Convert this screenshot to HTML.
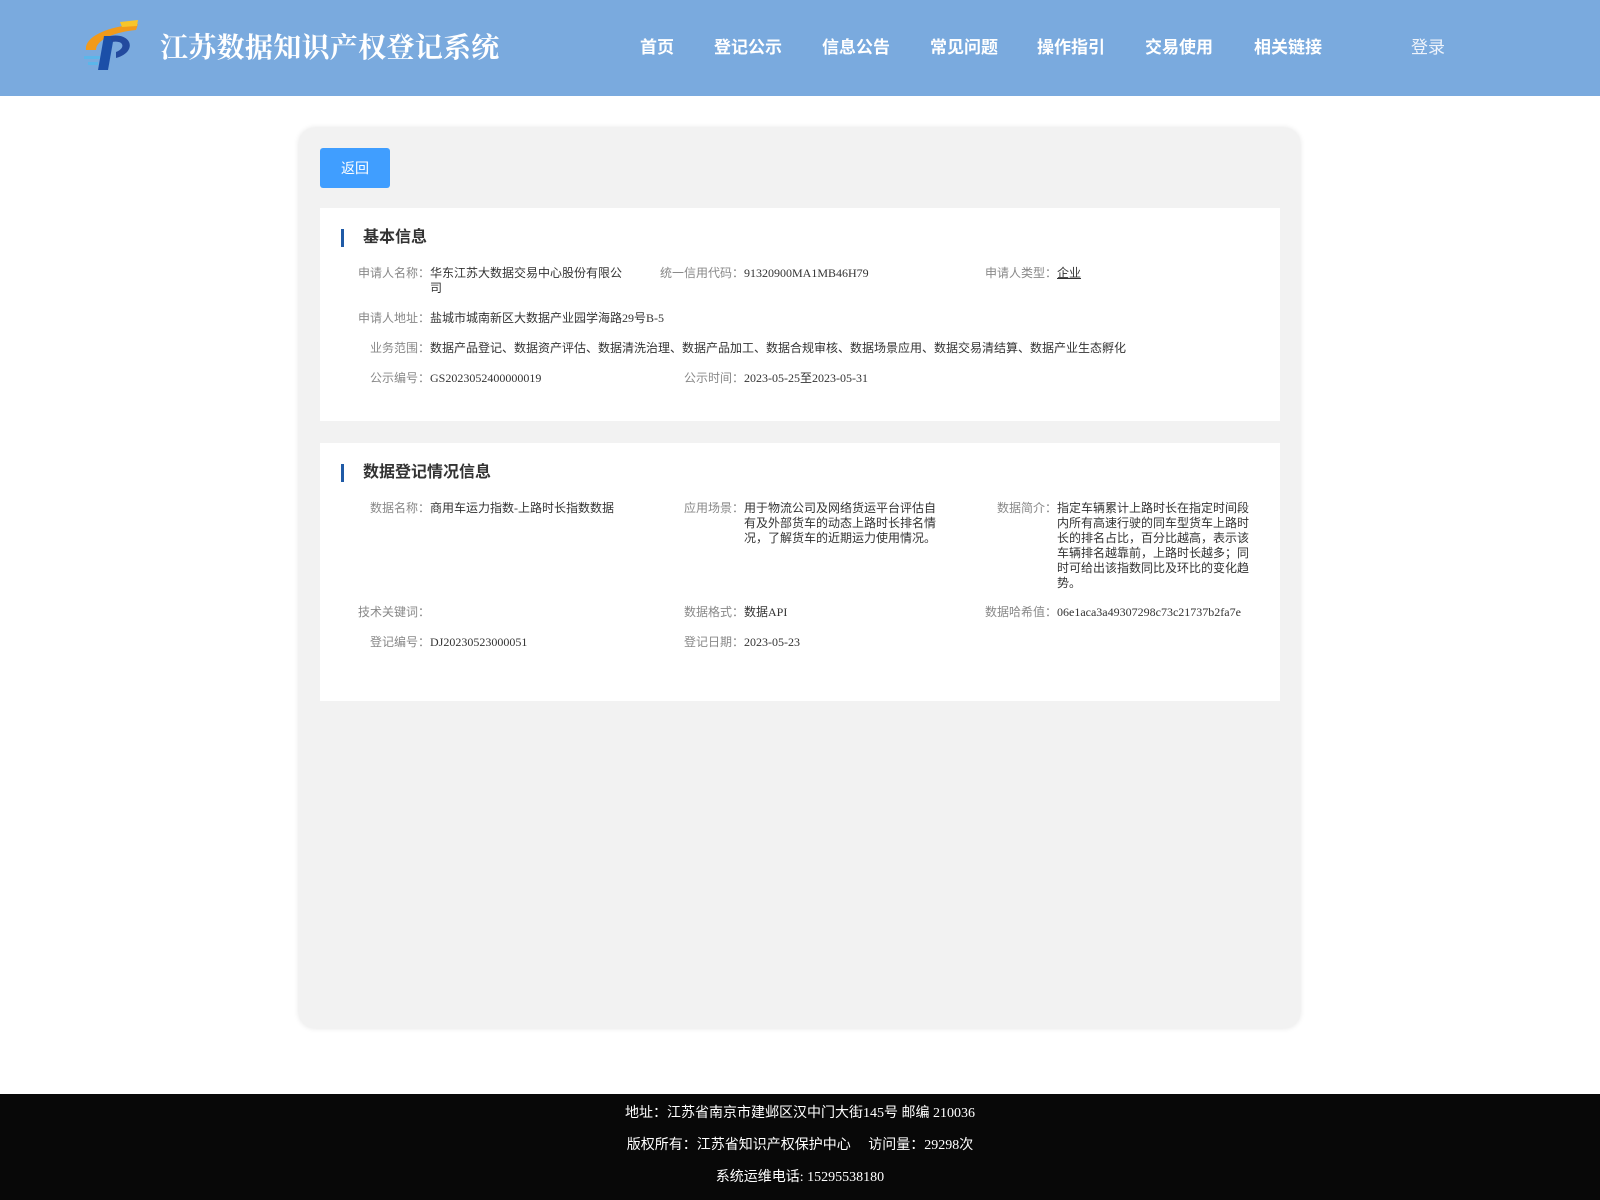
<!DOCTYPE html>
<html><head><meta charset="utf-8"><style>
*{margin:0;padding:0;box-sizing:border-box}
body{width:1600px;height:1200px;position:relative;background:#fff;font-family:"Liberation Serif","Noto Sans CJK SC",serif;overflow:hidden}
.hd{position:absolute;left:0;top:0;width:1600px;height:96px;background:#7aaade}
.title{position:absolute;left:160px;top:26px;color:#fff;font-size:28px;font-weight:bold;font-family:"Liberation Serif","Noto Serif CJK SC",serif;letter-spacing:0.3px}
.nav{position:absolute;top:33px;color:#fff;font-size:17px;font-weight:bold;font-family:"Liberation Sans","Noto Sans CJK SC",sans-serif}
.card{position:absolute;left:299px;top:128px;width:1001px;height:900px;background:#f2f2f2;border-radius:16px;box-shadow:0 0 6px rgba(0,0,0,.12)}
.btn{position:absolute;left:320px;top:148px;width:70px;height:40px;background:#409eff;border-radius:3px;color:#fff;font-size:14px;line-height:40px;text-align:center;font-family:"Liberation Sans","Noto Sans CJK SC",sans-serif}
.pn{position:absolute;left:320px;width:960px;background:#fff}
.pt{position:absolute;left:21px;font-size:16px;font-weight:bold;color:#333;padding-left:19px;border-left:3px solid #1f5aa6;line-height:18px;font-family:"Liberation Sans","Noto Sans CJK SC",sans-serif}
.r{position:absolute;font-size:12px;line-height:15px;display:flex}
.l{width:110px;text-align:right;color:#888;font-family:"Liberation Sans","Noto Sans CJK SC",sans-serif;flex:none}
.v{color:#333;width:194px}
.v.w{width:800px}
.ft{position:absolute;left:0;top:1094px;width:1600px;height:106px;background:#080808;color:#fff;font-size:14px;text-align:center;font-family:"Liberation Serif","Noto Sans CJK SC",serif}
.ft div{position:absolute;width:100%;}
</style></head><body>
<div class="hd">
<svg style="position:absolute;left:80px;top:18px" width="60" height="54" viewBox="0 0 60 54">
<path d="M6 32 C4 18 30 8 58 6 L56 12 C34 14 16 22 16 32 Z" fill="#f29a1a"/>
<path d="M40 4 L58 2 L57 8 L42 9Z" fill="#f7c52a"/>
<path d="M24 18 L34 18 L28 52 L18 52 Z" fill="#1b4fa8"/>
<path d="M30 18 C52 14 58 34 36 40 L36 34 C46 30 44 22 32 24Z" fill="#234a9e"/>
<rect x="4" y="38" width="16" height="3" fill="#5bb6ea"/><rect x="8" y="44" width="10" height="3" fill="#5bb6ea"/>
</svg>
<div class="title">江苏数据知识产权登记系统</div>
<div class="nav" style="left:640px">首页</div>
<div class="nav" style="left:714px">登记公示</div>
<div class="nav" style="left:822px">信息公告</div>
<div class="nav" style="left:930px">常见问题</div>
<div class="nav" style="left:1037px">操作指引</div>
<div class="nav" style="left:1145px">交易使用</div>
<div class="nav" style="left:1254px">相关链接</div>
<div class="nav" style="left:1411px;font-weight:normal;color:#eef3fb">登录</div>
</div>
<div class="card"></div>
<div class="btn">返回</div>
<div class="pn" style="top:208px;height:213px">
<div class="pt" style="top:21px">基本信息</div>
<div class="r" style="left:0;top:58px"><span class="l">申请人名称：</span><span class="v">华东江苏大数据交易中心股份有限公司</span></div>
<div class="r" style="left:314px;top:58px"><span class="l">统一信用代码：</span><span class="v">91320900MA1MB46H79</span></div>
<div class="r" style="left:627px;top:58px"><span class="l">申请人类型：</span><span class="v" style="text-decoration:underline">企业</span></div>
<div class="r" style="left:0;top:103px"><span class="l">申请人地址：</span><span class="v w">盐城市城南新区大数据产业园学海路29号B-5</span></div>
<div class="r" style="left:0;top:133px"><span class="l">业务范围：</span><span class="v w">数据产品登记、数据资产评估、数据清洗治理、数据产品加工、数据合规审核、数据场景应用、数据交易清结算、数据产业生态孵化</span></div>
<div class="r" style="left:0;top:163px"><span class="l">公示编号：</span><span class="v">GS2023052400000019</span></div>
<div class="r" style="left:314px;top:163px"><span class="l">公示时间：</span><span class="v">2023-05-25至2023-05-31</span></div>
</div>
<div class="pn" style="top:443px;height:258px">
<div class="pt" style="top:21px">数据登记情况信息</div>
<div class="r" style="left:0;top:58px"><span class="l">数据名称：</span><span class="v">商用车运力指数-上路时长指数数据</span></div>
<div class="r" style="left:314px;top:58px"><span class="l">应用场景：</span><span class="v">用于物流公司及网络货运平台评估自有及外部货车的动态上路时长排名情况，了解货车的近期运力使用情况。</span></div>
<div class="r" style="left:627px;top:58px"><span class="l">数据简介：</span><span class="v">指定车辆累计上路时长在指定时间段内所有高速行驶的同车型货车上路时长的排名占比，百分比越高，表示该车辆排名越靠前，上路时长越多；同时可给出该指数同比及环比的变化趋势。</span></div>
<div class="r" style="left:0;top:162px"><span class="l">技术关键词：</span><span class="v"></span></div>
<div class="r" style="left:314px;top:162px"><span class="l">数据格式：</span><span class="v">数据API</span></div>
<div class="r" style="left:627px;top:162px"><span class="l">数据哈希值：</span><span class="v" style="width:220px">06e1aca3a49307298c73c21737b2fa7e</span></div>
<div class="r" style="left:0;top:192px"><span class="l">登记编号：</span><span class="v">DJ20230523000051</span></div>
<div class="r" style="left:314px;top:192px"><span class="l">登记日期：</span><span class="v">2023-05-23</span></div>
</div>
<div class="ft">
<div style="top:8px">地址：江苏省南京市建邺区汉中门大街145号 邮编 210036</div>
<div style="top:40px">版权所有：江苏省知识产权保护中心&nbsp;&nbsp;&nbsp;&nbsp;&nbsp;访问量：29298次</div>
<div style="top:72px">系统运维电话: 15295538180</div>
</div>
</body></html>
